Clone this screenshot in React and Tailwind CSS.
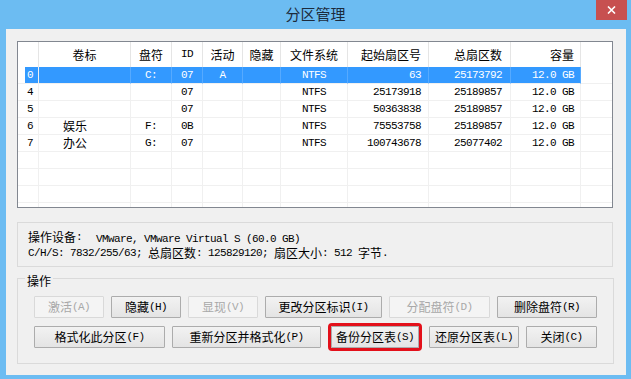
import React from "react";

const ASCII = /^[\x20-\x7e]+$/;

// CJK glyphs in Noto, ASCII runs in a narrow mono (6px per char like the bitmap font)
const Txt = ({ text }) =>
  text
    .split(/([\x20-\x7e]+)/)
    .filter(Boolean)
    .map((p, i) =>
      ASCII.test(p) ? (
        <span
          key={i}
          className="font-['Liberation_Mono',monospace] text-[11px] tracking-[-0.6px] whitespace-pre"
        >
          {p}
        </span>
      ) : (
        <span key={i}>{p}</span>
      )
    );

const cols = [
  { w: "w-[21px]", head: "", h: "justify-start", d: "justify-start" },
  { w: "w-[92px]", head: "卷标", h: "justify-center", d: "justify-start pl-[24px]" },
  { w: "w-[41px]", head: "盘符", h: "justify-center", d: "justify-center" },
  { w: "w-[31px]", head: "ID", h: "justify-center", d: "justify-center" },
  { w: "w-[40px]", head: "活动", h: "justify-center", d: "justify-center" },
  { w: "w-[38px]", head: "隐藏", h: "justify-center", d: "justify-center" },
  { w: "w-[67px]", head: "文件系统", h: "justify-center", d: "justify-center" },
  { w: "w-[81px]", head: "起始扇区号", h: "justify-end pr-[7px]", d: "justify-end pr-[7px]" },
  { w: "w-[82px]", head: "总扇区数", h: "justify-end pr-[8px]", d: "justify-end pr-[8px]" },
  { w: "w-[70px]", head: "容量", h: "justify-end pr-[6px]", d: "justify-end pr-[6px]" },
];

const rows = [
  ["0", "", "C:", "07", "A", "", "NTFS", "63", "25173792", "12.0 GB"],
  ["4", "", "", "07", "", "", "NTFS", "25173918", "25189857", "12.0 GB"],
  ["5", "", "", "07", "", "", "NTFS", "50363838", "25189857", "12.0 GB"],
  ["6", "娱乐", "F:", "0B", "", "", "NTFS", "75553758", "25189857", "12.0 GB"],
  ["7", "办公", "G:", "07", "", "", "NTFS", "100743678", "25077402", "12.0 GB"],
  ["", "", "", "", "", "", "", "", "", ""],
  ["", "", "", "", "", "", "", "", "", ""],
  ["", "", "", "", "", "", "", "", "", ""],
  ["", "", "", "", "", "", "", "", "", ""],
];

const Btn = ({ label, className, disabled }) => (
  <button
    className={`h-[22px] shrink-0 flex items-center justify-center border rounded-[1px] leading-[14px] ${
      disabled
        ? "border-[#d9d9d9] bg-[#f4f4f4] text-[#a8a8a8]"
        : "border-[#acacac] bg-linear-to-b from-[#f2f2f2] to-[#e4e4e4] text-black"
    } ${className}`}
  >
    <Txt text={label} />
  </button>
);

export default function App() {
  return (
    <div className="w-[631px] h-[379px] bg-[#6cbcf2] flex flex-col font-['Noto_Sans_CJK_SC',sans-serif] text-[12px] text-black overflow-hidden">
      {/* title bar */}
      <div className="relative h-[29px] shrink-0 flex items-center justify-center">
        <span className="text-[15px] leading-[18px] text-[#1c2b3c] -mt-[1px]">分区管理</span>
        <div className="absolute top-0 right-[4px] w-[31px] h-[20px] bg-[#c75050] flex items-center justify-center">
          <svg width="9" height="8" viewBox="0 0 9 8">
            <path d="M1 0.5 L8 7.5 M8 0.5 L1 7.5" stroke="white" strokeWidth="1.6" />
          </svg>
        </div>
      </div>

      {/* client */}
      <div className="ml-[6px] mr-[5px] mb-[4px] flex-1 bg-[#f0f0f0] pt-[12px] pl-[11px] flex flex-col">
        {/* list view */}
        <div className="w-[596px] h-[167px] border border-[#828790] bg-white overflow-hidden">
          <div className="flex h-[25px]">
            {cols.map((c, i) => (
              <div
                key={i}
                className={`${c.w} shrink-0 flex items-center border-r border-[#e5e5e5] ${c.h}`}
              >
                <Txt text={c.head} />
              </div>
            ))}
            <div className="flex-1" />
          </div>
          {rows.map((r, ri) => {
            const sel = ri === 0;
            return (
              <div key={ri} className="flex h-[17px]">
                {r.map((v, ci) =>
                  ci === 0 ? (
                    <div
                      key={ci}
                      className={`${cols[0].w} shrink-0 border-b border-r border-[#f0f0f0]`}
                    >
                      <div
                        className={`ml-[7px] h-full flex items-center pl-[2px] ${
                          sel ? "bg-[#3399ff] text-white" : ""
                        }`}
                      >
                        <Txt text={v} />
                      </div>
                    </div>
                  ) : (
                    <div
                      key={ci}
                      className={`${cols[ci].w} shrink-0 flex items-center border-b border-r ${
                        sel
                          ? "bg-[#3399ff] text-white border-r-[#56aaff] border-b-[#f0f0f0]"
                          : "border-[#f0f0f0]"
                      } ${cols[ci].d}`}
                    >
                      <Txt text={v} />
                    </div>
                  )
                )}
                <div className="flex-1 border-b border-[#f0f0f0]" />
              </div>
            );
          })}
        </div>

        {/* device info */}
        <div className="mt-[14px] w-[596px] h-[45px] border border-[#dadada] pl-[10px] pt-[7px] leading-[14px]">
          <div className="flex">
            <Txt text="操作设备:" />
            <span className="ml-[14px]">
              <Txt text="VMware, VMware Virtual S (60.0 GB)" />
            </span>
          </div>
          <div className="flex">
            <Txt text="C/H/S: 7832/255/63; 总扇区数: 125829120; 扇区大小: 512 字节." />
          </div>
        </div>

        {/* operations group */}
        <div className="relative mt-[11px] w-[597px] h-[86px] border border-[#dadada] pt-[17px] pl-[16px] flex flex-col gap-[8px]">
          <span className="absolute -top-[5px] left-[7px] px-[2px] bg-[#f0f0f0] leading-[14px]">
            操作
          </span>
          <div className="flex gap-[7px]">
            <Btn label="激活(A)" className="w-[70px]" disabled />
            <Btn label="隐藏(H)" className="w-[70px]" />
            <Btn label="显现(V)" className="w-[70px]" disabled />
            <Btn label="更改分区标识(I)" className="w-[117px]" />
            <Btn label="分配盘符(D)" className="w-[101px]" disabled />
            <Btn label="删除盘符(R)" className="w-[100px]" />
          </div>
          <div className="flex gap-[7px]">
            <Btn label="格式化此分区(F)" className="w-[131px]" />
            <Btn label="重新分区并格式化(P)" className="w-[149px]" />
            <Btn
              label="备份分区表(S)"
              className="w-[88px] mx-[3px] outline-[3px] outline-solid outline-[#e3101a]"
            />
            <Btn label="还原分区表(L)" className="w-[90px]" />
            <Btn label="关闭(C)" className="w-[71px]" />
          </div>
        </div>
      </div>
    </div>
  );
}
